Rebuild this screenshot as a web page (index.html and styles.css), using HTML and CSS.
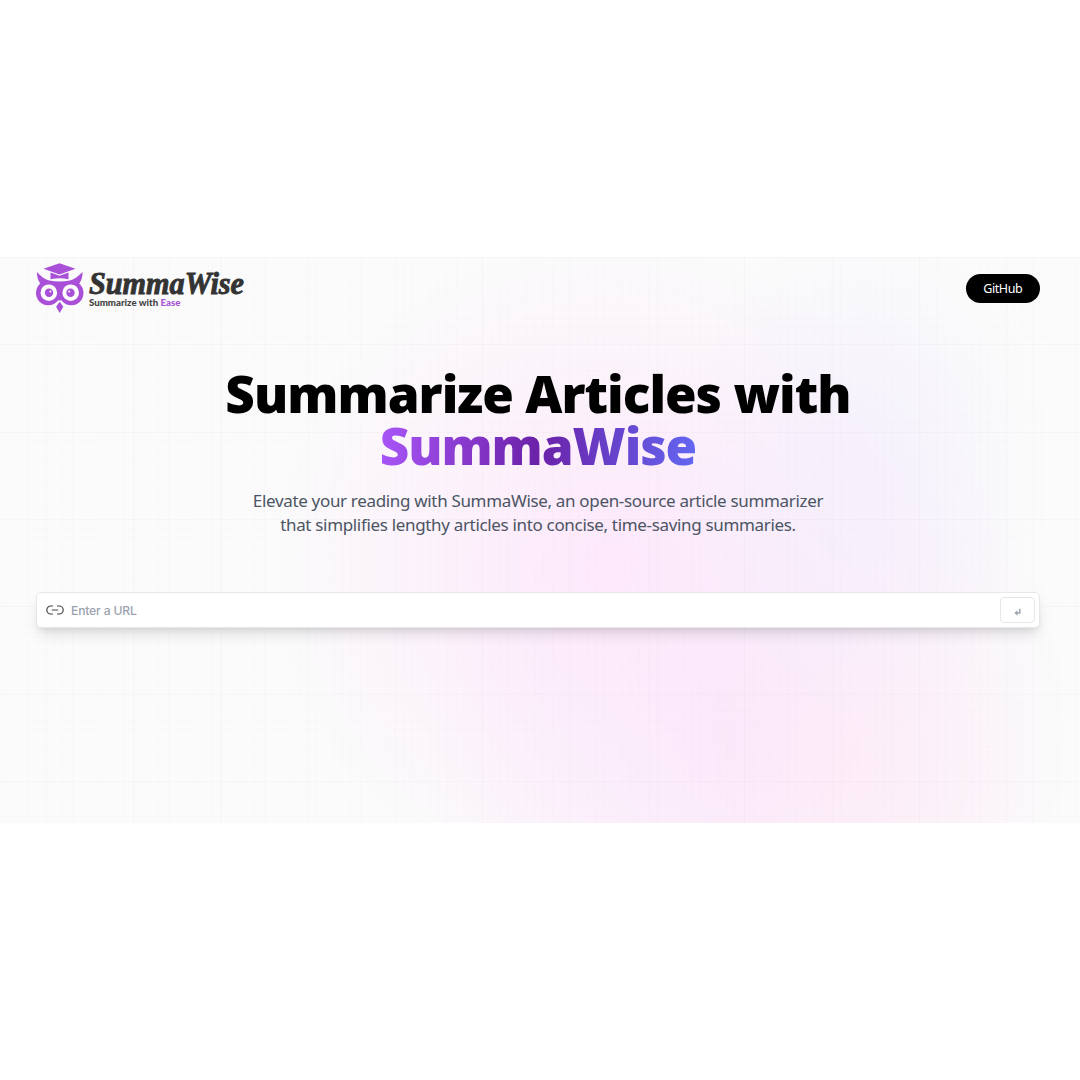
FILE: index.html
```html
<!DOCTYPE html>
<html lang="en">
<head>
<meta charset="utf-8">
<title>SummaWise</title>
<link rel="stylesheet" href="styles.css">
</head>
<body>
<div class="page">
  <header class="nav">
    <svg class="logo" width="212" height="52" viewBox="0 0 212 52" role="img" aria-label="SummaWise">
      <g fill="#a94fd8">
        <path d="M23.500 1.200L39.500 6.800L23.500 12.500L7.500 6.800Z"/>
        <path d="M14.500 10.500L23.500 13.700L32.500 10.500V17.300Q23.500 15.300 14.500 17.300Z"/>
        <path d="M1 10C5 14.500 8.500 17 13 18.500Q23.500 20.700 34 18.500C38.500 17 42 14.500 46.500 10C46.700 14 45.800 18 43 22L36 36L23.700 38.500L11 36L4.500 22C1.700 18 .8 14 1 10Z"/>
        <circle cx="12.200" cy="31" r="12.200"/><circle cx="35.300" cy="31" r="12.200"/>
        <path d="M23.700 39.800L27.300 44.800L23.700 51L20.100 44.800Z"/>
      </g>
      <g fill="#fdfcfd"><circle cx="12.800" cy="30.700" r="8.300"/><circle cx="34.700" cy="30.700" r="8.300"/></g>
      <g fill="#a94fd8"><circle cx="13" cy="30.700" r="4.200"/><circle cx="34.500" cy="30.700" r="4.200"/></g>
      <g fill="#fff"><circle cx="14.400" cy="29.600" r="1"/><circle cx="33.200" cy="29.600" r="1"/></g>
      <text class="logo-name" x="53" y="31.500" textLength="155" lengthAdjust="spacingAndGlyphs">SummaWise</text>
      <text class="logo-tag" x="53" y="44.200" textLength="91.500" lengthAdjust="spacingAndGlyphs">Summarize with <tspan class="logo-ease">Ease</tspan></text>
    </svg>
    <button class="github">GitHub</button>
  </header>
  <main class="hero">
    <h1 class="title"><span class="title-main">Summarize Articles with</span><br><span class="title-brand">SummaWise</span></h1>
    <p class="desc">Elevate your reading with SummaWise, an open-source article summarizer<br>that simplifies lengthy articles into concise, time-saving summaries.</p>
    <form class="search">
      <svg class="link" width="18" height="10" viewBox="0 0 18 10" fill="none" stroke="#444" stroke-width="1.200" stroke-linecap="round"><path d="M6.500 1H4.800A4 4 0 0 0 4.800 9H6.500M11.500 1H13.200A4 4 0 0 1 13.200 9H11.500M6.200 5H11.800"/></svg>
      <span class="placeholder">Enter a URL</span>
      <span class="enter"><svg width="7" height="8" viewBox="0 0 7 8"><path d="M5.800 .7V5H2.800" fill="none" stroke="#9ca3af" stroke-width="1.500"/><path d="M3.500 2.300V7.700L.3 5Z" fill="#9ca3af"/></svg></span>
    </form>
  </main>
</div>
</body>
</html>
```
FILE: styles.css
```css
* { box-sizing: border-box; }
body { margin: 0; background: #fff; height: 1080px; padding-top: 257px; }
.page {
  height: 566px;
  padding: 0 40px 0 36px;
  background:
    repeating-linear-gradient(90deg, rgba(80,60,90,.01) 0 1px, transparent 1px 8.730px) 2px 0,
    repeating-linear-gradient(180deg, rgba(80,60,90,.01) 0 1px, transparent 1px 8.730px),
    repeating-linear-gradient(90deg, transparent 0 46px, rgba(80,60,90,.014) 46px 47px, transparent 47px 87.300px),
    repeating-linear-gradient(180deg, rgba(80,60,90,.014) 0 1px, transparent 1px 87.300px),
    radial-gradient(ellipse 190px 250px at 860px 210px, rgba(243,238,253,.7), rgba(243,238,253,0)),
    radial-gradient(ellipse 170px 200px at 870px 520px, rgba(254,236,245,.55), rgba(254,236,245,0)),
    radial-gradient(ellipse 320px 380px at 750px 480px, rgba(251,232,251,1), rgba(251,232,251,0)),
    radial-gradient(ellipse 340px 330px at 610px 310px, rgba(254,233,252,1), rgba(254,233,252,0)),
    #fbfbfb;
}
.nav { display: flex; justify-content: space-between; align-items: center; height: 63px; }
.logo { display: block; margin-top: -1px; }
.logo-name { font: italic bold 31px "Liberation Serif", serif; fill: #333; stroke: #333; stroke-width: .9px; }
.logo-tag { font: 900 8.800px Lato, sans-serif; fill: #444; }
.logo-ease { fill: #a855d6; }
.github { width: 74.500px; height: 29px; padding: 0; border: 0; border-radius: 15px; background: #000; color: #fff; font: 12.500px "Noto Sans", sans-serif; letter-spacing: -.4px; }
.hero { display: flex; flex-direction: column; align-items: center; }
.title { margin: 47px 0 0; font: 900 51.200px/52.400px "Noto Sans", sans-serif; color: #000; text-align: center; white-space: nowrap; }
.title-main { letter-spacing: -.970px; }
.title-brand { letter-spacing: -1.080px; color: transparent; background: linear-gradient(90deg, #a855f7, #6b21a8 50%, #6366f1); background-clip: text; -webkit-background-clip: text; }
.desc { margin: 17px 0 0; font: 17px/24.400px "Noto Sans", sans-serif; letter-spacing: -.330px; color: #4b5563; text-align: center; white-space: nowrap; }
.search { display: flex; align-items: center; width: 1004px; height: 36px; margin: 54px 0 0; padding: 0 4px 0 9px; background: #fff; border: 1px solid #e8e8ec; border-radius: 5px; box-shadow: 0 9px 13px -3px rgba(0,0,0,.12), 0 3px 5px -2px rgba(0,0,0,.08); }
.placeholder { flex: 1; margin-left: 7px; padding-top: 1px; font: 500 12.200px Inter, sans-serif; letter-spacing: -.200px; color: #9ca3af; }
.enter { display: flex; align-items: center; justify-content: center; width: 35px; height: 26px; padding-top: 4px; border: 1px solid #e5e7eb; border-radius: 4px; }
```
